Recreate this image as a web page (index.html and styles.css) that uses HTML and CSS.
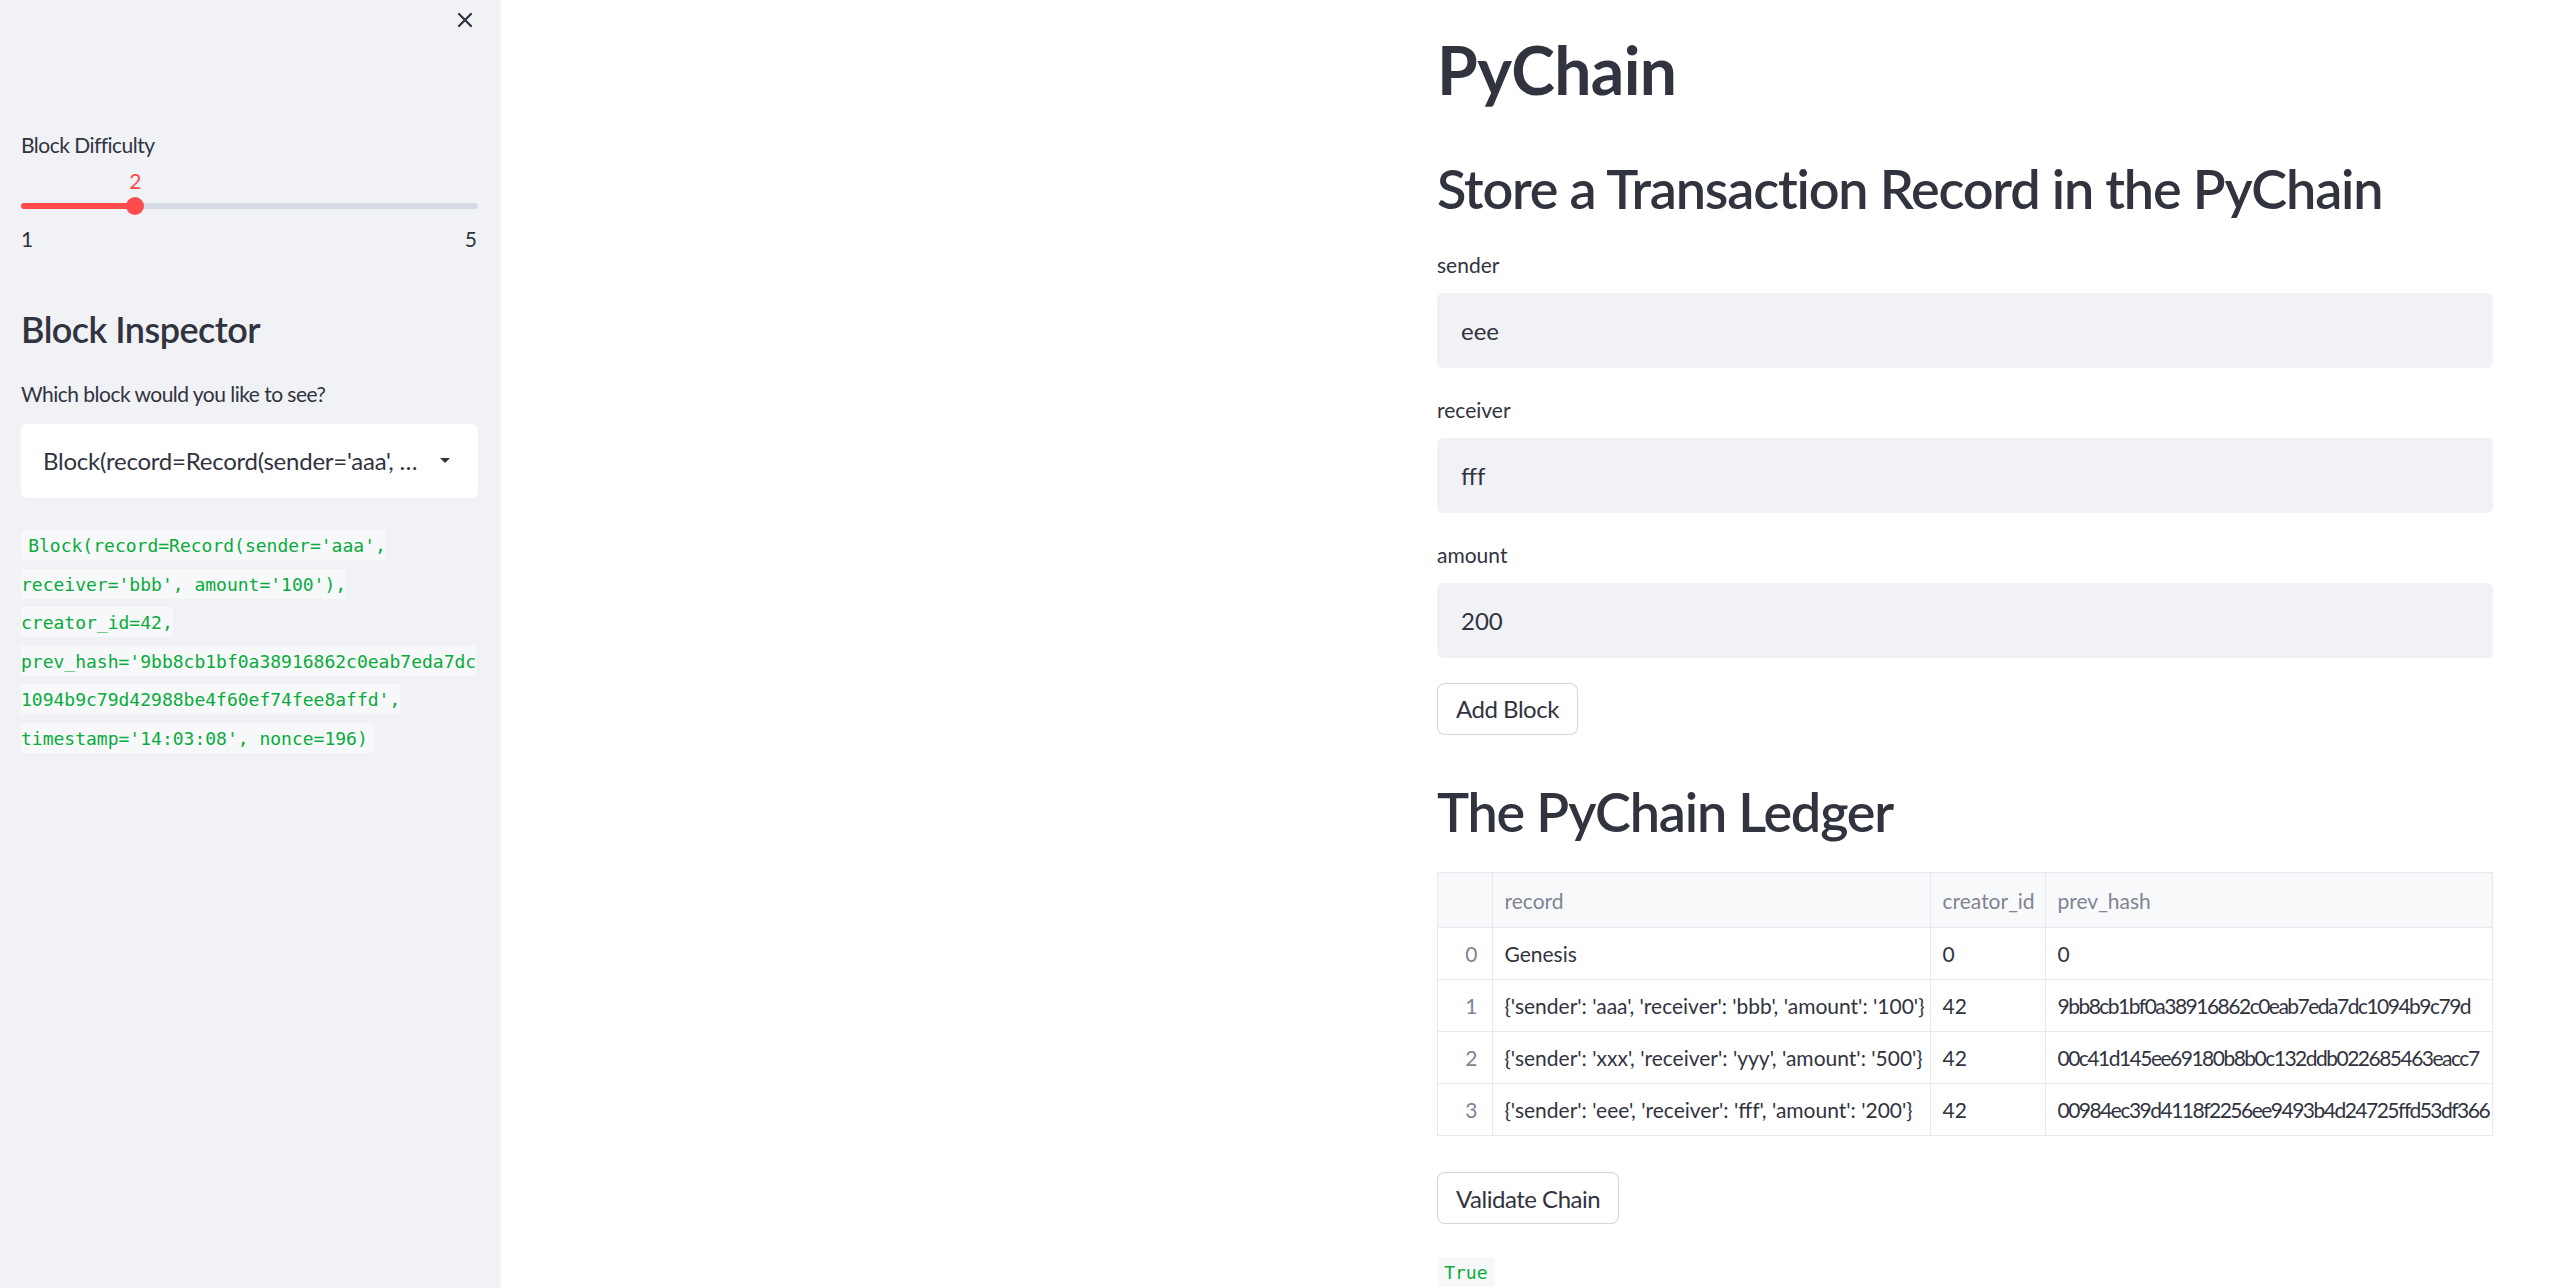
FILE: index.html
```html
<!DOCTYPE html>
<html lang="en">
<head>
<meta charset="utf-8">
<title>PyChain</title>
<link rel="stylesheet" href="styles.css">
</head>
<body>
<aside class="sidebar">
  <div class="sb-top">
    <svg class="close" viewBox="0 0 16 16" width="16" height="16" aria-label="Close">
      <path d="M2 2 L14 14 M14 2 L2 14" stroke="#31333f" stroke-width="2.2" stroke-linecap="round" fill="none"/>
    </svg>
  </div>
  <div class="sb-content">
    <label class="wlabel sb-label">Block Difficulty</label>
    <div class="slider">
      <div class="slider-track"><div class="slider-fill" style="width:25%"></div></div>
      <div class="slider-thumb" style="left:25%"></div>
      <div class="slider-value" style="left:25%">2</div>
    </div>
    <div class="slider-ticks"><span>1</span><span>5</span></div>

    <h2 class="sb-h">Block Inspector</h2>
    <label class="wlabel sb-label">Which block would you like to see?</label>
    <div class="select">
      <span class="select-text">Block(record=Record(sender='aaa', …</span>
      <svg class="caret" viewBox="0 0 10 5" width="10" height="5"><path d="M0 0 H10 L5 5 Z" fill="#31333f"/></svg>
    </div>
    <p class="code-p"><code class="code">Block(record=Record(sender='aaa', receiver='bbb', amount='100'), creator_id=42, prev_hash='9bb8cb1bf0a38916862c0eab7eda7dc1094b9c79d42988be4f60ef74fee8affd', timestamp='14:03:08', nonce=196)</code></p>
  </div>
</aside>

<main class="main">
  <div class="block">
    <h1 class="title">PyChain</h1>
    <h2 class="heading first">Store a Transaction Record in the PyChain</h2>

    <div class="field first-field">
      <label class="wlabel">sender</label>
      <div class="input">eee</div>
    </div>
    <div class="field">
      <label class="wlabel">receiver</label>
      <div class="input">fff</div>
    </div>
    <div class="field">
      <label class="wlabel">amount</label>
      <div class="input">200</div>
    </div>

    <button class="btn add-btn">Add Block</button>

    <h2 class="heading ledger">The PyChain Ledger</h2>

    <div class="table-wrap">
      <table class="grid">
        <colgroup>
          <col class="c-idx"><col class="c-rec"><col class="c-cid"><col class="c-hash">
        </colgroup>
        <thead>
          <tr><th class="idx"></th><th>record</th><th>creator_id</th><th>prev_hash</th></tr>
        </thead>
        <tbody>
          <tr><td class="idx">0</td><td>Genesis</td><td>0</td><td class="hash">0</td></tr>
          <tr><td class="idx">1</td><td>{'sender': 'aaa', 'receiver': 'bbb', 'amount': '100'}</td><td>42</td><td class="hash">9bb8cb1bf0a38916862c0eab7eda7dc1094b9c79d</td></tr>
          <tr><td class="idx">2</td><td>{'sender': 'xxx', 'receiver': 'yyy', 'amount': '500'}</td><td>42</td><td class="hash">00c41d145ee69180b8b0c132ddb022685463eacc7</td></tr>
          <tr><td class="idx">3</td><td>{'sender': 'eee', 'receiver': 'fff', 'amount': '200'}</td><td>42</td><td class="hash">00984ec39d4118f2256ee9493b4d24725ffd53df366</td></tr>
        </tbody>
      </table>
    </div>

    <button class="btn validate-btn">Validate Chain</button>
    <p class="code-p result"><code class="code">True</code></p>
  </div>
</main>
</body>
</html>
```

FILE: styles.css
```css
* { box-sizing: border-box; }

html, body {
  margin: 0;
  padding: 0;
}

body {
  width: 2550px;
  height: 1288px;
  overflow: hidden;
  display: flex;
  font-family: Lato, "Noto Sans", sans-serif;
  color: #31333f;
  background: #ffffff;
}

/* ---------- Sidebar ---------- */
.sidebar {
  flex: none;
  width: 501px;
  height: 100%;
  background: #f0f2f6;
}

.sb-top {
  display: flex;
  justify-content: flex-end;
  padding: 12px 28px 0 0;
  height: 28px;
}

.close {
  display: block;
  width: 16px;
  height: 16px;
}

.sb-content {
  padding: 100px 23px 0 21px;
}

.wlabel {
  display: block;
  font-size: 21px;
  line-height: 33.6px;
  color: #31333f;
}

.sb-label {
  letter-spacing: -0.025em;
}

.slider {
  position: relative;
  height: 60.4px;
}

.slider-track {
  position: absolute;
  left: 0;
  right: 0;
  top: 41.4px;
  height: 6px;
  border-radius: 3px;
  background: #d6dae5;
  overflow: hidden;
}

.slider-fill {
  height: 100%;
  background: #ff4b4b;
}

.slider-thumb {
  position: absolute;
  top: 35.4px;
  width: 18px;
  height: 18px;
  border-radius: 50%;
  background: #ff4b4b;
  transform: translateX(-50%);
}

.slider-value {
  position: absolute;
  top: 8px;
  font-size: 21px;
  line-height: 21px;
  color: #ff4b4b;
  transform: translateX(-50%);
}

.slider-ticks {
  display: flex;
  justify-content: space-between;
  font-size: 21px;
  line-height: 33.6px;
  padding-right: 1px;
}

.sb-h {
  margin: 52px 0 26px;
  font-size: 36px;
  font-weight: 600;
  line-height: 43.2px;
  letter-spacing: -0.015em;
}

.select {
  margin-top: 13.6px;
  height: 74px;
  background: #ffffff;
  border-radius: 6px;
  display: flex;
  align-items: center;
  justify-content: space-between;
  padding: 0 28px 0 22px;
  font-size: 24px;
  letter-spacing: -0.01em;
}

.select-text {
  white-space: nowrap;
  overflow: hidden;
}

.caret {
  display: block;
  flex: none;
}

.code-p {
  margin: 26px 0 0;
  font-size: 24px;
  line-height: 38.4px;
}

.code {
  font-family: "DejaVu Sans Mono", "Liberation Mono", monospace;
  font-size: 18px;
  line-height: 1;
  color: #09ab3b;
  background: #f7f8fa;
  padding: 0.25em 0.4em;
  border-radius: 4px;
  overflow-wrap: break-word;
  word-wrap: break-word;
}

/* ---------- Main ---------- */
.main {
  flex: 1;
  display: flex;
  justify-content: flex-end;
  padding-right: 57px;
}

.block {
  width: 1056px;
  padding-top: 30px;
}

.title {
  margin: 0;
  font-size: 66px;
  font-weight: 700;
  line-height: 79.2px;
  letter-spacing: -0.01em;
}

.heading {
  margin: 0;
  font-size: 54px;
  font-weight: 600;
  line-height: 64.8px;
  letter-spacing: -0.022em;
}

.heading.first {
  margin-top: 47.5px;
}

.field {
  margin-top: 25px;
}

.field.first-field {
  margin-top: 26.5px;
}

.input {
  margin-top: 11.4px;
  height: 75px;
  border-radius: 6px;
  background: #f0f2f6;
  display: flex;
  align-items: center;
  padding: 0 24px;
  font-size: 24px;
  color: #31333f;
}

.btn {
  display: block;
  height: 52px;
  padding: 0 18px;
  font-family: inherit;
  font-size: 24px;
  letter-spacing: -0.02em;
  color: #31333f;
  background: #ffffff;
  border: 1px solid rgba(49, 51, 63, 0.2);
  border-radius: 8px;
}

.add-btn {
  margin-top: 25px;
}

.heading.ledger {
  margin-top: 45px;
}

.table-wrap {
  margin-top: 27.5px;
  width: 1056px;
  overflow: hidden;
  border: 1px solid #e6e9ef;
}

.grid {
  width: 100%;
  table-layout: fixed;
  border-collapse: collapse;
  font-size: 21px;
}

.c-idx { width: 54px; }
.c-rec { width: 438px; }
.c-cid { width: 115px; }

.grid th,
.grid td {
  padding: 0 12px;
  text-align: left;
  white-space: nowrap;
  overflow: hidden;
  text-overflow: clip;
  border: 1px solid #e6e9ef;
  font-weight: 400;
}

.grid tr > :first-child { border-left: none; }
.grid tr > :last-child { border-right: none; }
.grid thead th { border-top: none; }
.grid tbody tr:last-child td { border-bottom: none; }

.grid th {
  height: 54px;
  background: #f8f9fb;
  color: #808495;
}

.grid td {
  height: 52px;
  color: #31333f;
}

.grid .hash {
  padding-right: 0;
  letter-spacing: -0.072em;
}

.grid .idx {
  text-align: right;
  padding-right: 14px;
  color: #808495;
}

.validate-btn {
  margin-top: 36px;
}

.result {
  margin-top: 26px;
}
```
